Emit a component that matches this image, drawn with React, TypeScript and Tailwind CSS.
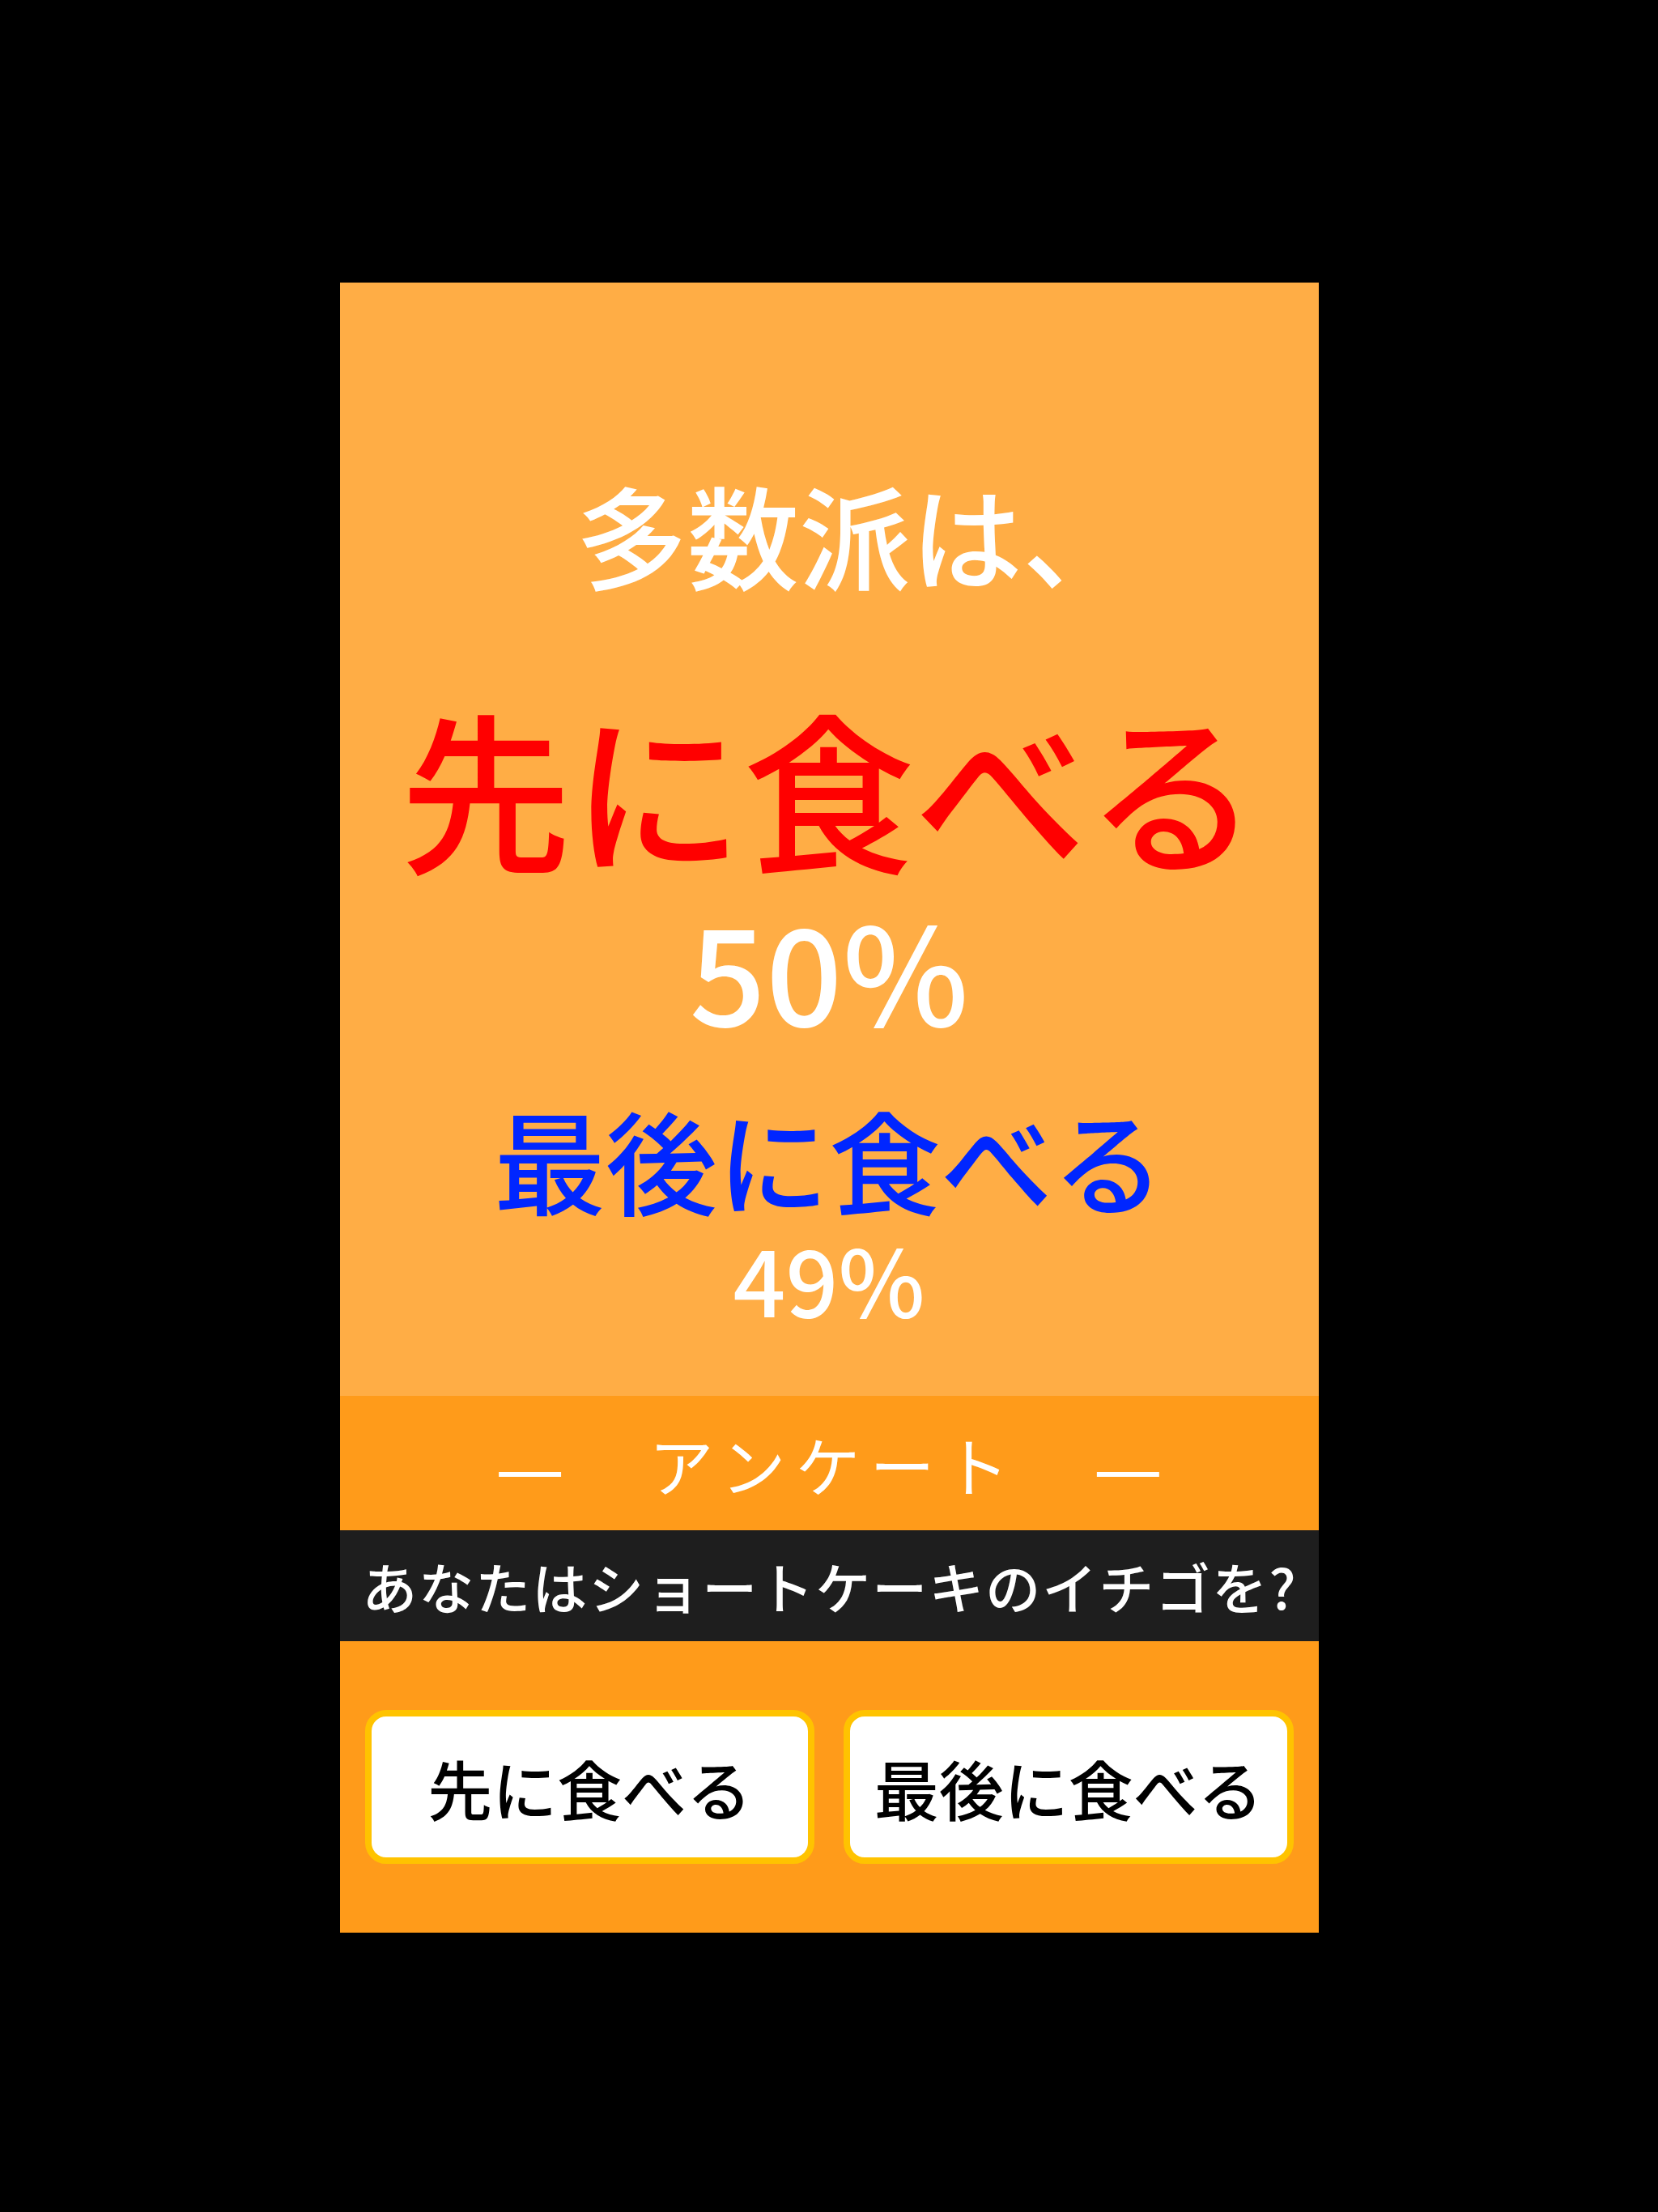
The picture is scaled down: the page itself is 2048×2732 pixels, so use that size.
import React from 'react';

const FONT = { fontFamily: '"Noto Sans CJK JP", "Noto Sans", sans-serif' };

const choices = ['先に食べる', '最後に食べる'];

export default function App() {
  return (
    <div className="min-h-screen w-full bg-black flex items-center justify-center pt-[4px]" style={FONT}>
      <div className="w-[1209px] flex flex-col">
        {/* result */}
        <div className="h-[1375px] bg-[#ffad45] flex flex-col items-center pt-[240px]">
          <p className="pl-[64px] text-[138px] leading-[138px] font-medium text-white">多数派は、</p>
          <p className="mt-[138px] text-[212px] leading-[212px] font-medium text-[#ff0000]">先に食べる</p>
          <p className="mt-[36px] text-[166px] leading-[166px] font-medium text-white">50%</p>
          <p className="mt-[82px] text-[138px] leading-[138px] font-medium text-[#0026ff]">最後に食べる</p>
          <p className="mt-[22px] text-[114px] leading-[114px] font-medium text-white">49%</p>
        </div>

        {/* survey header */}
        <div className="h-[166px] bg-[#ff9b1a] flex items-center justify-center gap-[104px] text-white">
          <span className="text-[96px] leading-none">—</span>
          <span className="text-[80px] leading-none tracking-[12px] mr-[-12px]">アンケート</span>
          <span className="text-[96px] leading-none">—</span>
        </div>

        <div className="h-[137px] bg-[#1e1e1e] flex items-center justify-center">
          <span className="pl-[2px] text-[68px] leading-none font-medium text-white tracking-[2px]">あなたはショートケーキのイチゴを?</span>
        </div>

        <div className="bg-[#ff9b1a] px-[31px] py-[85px] grid grid-cols-2 gap-[36px]">
          {choices.map((c) => (
            <button
              key={c}
              className="h-[190px] rounded-[26px] border-[8px] border-[#ffc300] bg-white text-black text-[80px] leading-none font-medium flex items-center justify-center"
            >
              {c}
            </button>
          ))}
        </div>
      </div>
    </div>
  );
}
